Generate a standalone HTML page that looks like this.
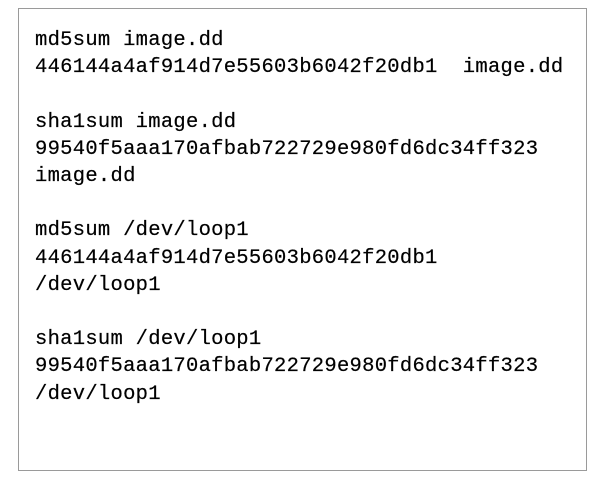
<!DOCTYPE html>
<html><head><style>
html,body{margin:0;padding:0;background:#fff;width:600px;height:487px;overflow:hidden}
.box{position:absolute;left:18px;top:8px;width:569px;height:463px;border:1.5px solid #9a9a9a;box-sizing:border-box}
pre{position:absolute;left:35px;top:27px;margin:0;font-family:"Liberation Mono",monospace;font-size:20.5px;line-height:27.2px;color:#000;letter-spacing:0.28px;-webkit-text-stroke:0.2px #000}
</style></head><body>
<div class="box"></div>
<pre>md5sum image.dd
446144a4af914d7e55603b6042f20db1  image.dd

sha1sum image.dd
99540f5aaa170afbab722729e980fd6dc34ff323
image.dd

md5sum /dev/loop1
446144a4af914d7e55603b6042f20db1
/dev/loop1

sha1sum /dev/loop1
99540f5aaa170afbab722729e980fd6dc34ff323
/dev/loop1</pre>
</body></html>
